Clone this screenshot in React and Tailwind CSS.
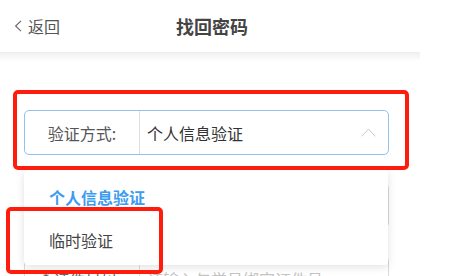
import React from 'react';

const FONT = { fontFamily: '"Noto Sans CJK SC", "Noto Sans", sans-serif' };

function Row({ label, children, right }) {
  return (
    <div className="flex h-[45px] w-[365px] items-stretch rounded-[5px] border border-[#d9d9d9] bg-white">
      <div className="flex w-[115px] items-center justify-center border-r border-[#dedede] text-[16px] text-[#666]">
        {label}
      </div>
      <div className="flex flex-1 items-center pl-[7px] pr-[12px] text-[16px]">
        {children}
        {right}
      </div>
    </div>
  );
}

export default function App() {
  return (
    <div className="relative h-[276px] w-[451px] overflow-hidden bg-white" style={FONT}>
      {/* header */}
      <div className="grid h-[52px] w-[420px] grid-cols-[1fr_auto_1fr] items-center bg-white">
        <div className="flex items-center gap-[6px] pl-[14px] text-[16px] text-[#555]">
          <svg width="8" height="12" viewBox="0 0 8 12" fill="none">
            <path d="M7 0.8 L1.6 6 L7 11.2" stroke="#666" strokeWidth="1.1" />
          </svg>
          <span>返回</span>
        </div>
        <div className="pl-[4px] text-[18px] font-bold text-[#444]">找回密码</div>
        <div />
      </div>
      <div className="h-[9px] w-[420px] bg-gradient-to-b from-[#eeeeee] to-white" />

      {/* form */}
      <div className="mt-[49px] flex flex-col gap-[28px] pl-[24px]">
        <div className="flex h-[45px] w-[365px] items-stretch rounded-[5px] border border-[#8fc3ee] bg-white">
          <div className="flex w-[115px] items-center justify-center border-r border-[#dedede] text-[16px] text-[#555]">
            验证方式:
          </div>
          <div className="flex flex-1 items-center justify-between pl-[7px] pr-[12px] text-[16px] text-[#333]">
            <span>个人信息验证</span>
            <svg width="15" height="9" viewBox="0 0 15 9" fill="none">
              <path d="M0.7 8.3 L7.5 1.2 L14.3 8.3" stroke="#c9c9c9" strokeWidth="1" />
            </svg>
          </div>
        </div>
        <Row label="姓名:">
          <span className="text-[#bbb]">请输入姓名</span>
        </Row>
        <Row label="* 证件号码:">
          <span className="text-[#c4c4c4]">请输入与学号绑定证件号</span>
        </Row>
      </div>

      {/* dropdown menu */}
      <div className="absolute left-[24px] top-[170px] h-[95px] w-[364px] rounded-[4px] bg-white pt-[5px] shadow-[0_2px_8px_rgba(0,0,0,0.12)]">
        <div className="flex h-[43px] items-center pl-[25px] text-[16px] font-bold text-[#3b9cf0]">个人信息验证</div>
        <div className="flex h-[43px] items-center pl-[25px] text-[16px] text-[#444]">临时验证</div>
      </div>

      {/* annotation boxes */}
      <div className="absolute left-[13px] top-[90px] h-[80px] w-[396px] rounded-[5px] border-4 border-[#ff1c0d]" />
      <div className="absolute left-[6px] top-[207px] h-[67px] w-[157px] rounded-[5px] border-4 border-[#ff1c0d]" />
    </div>
  );
}
